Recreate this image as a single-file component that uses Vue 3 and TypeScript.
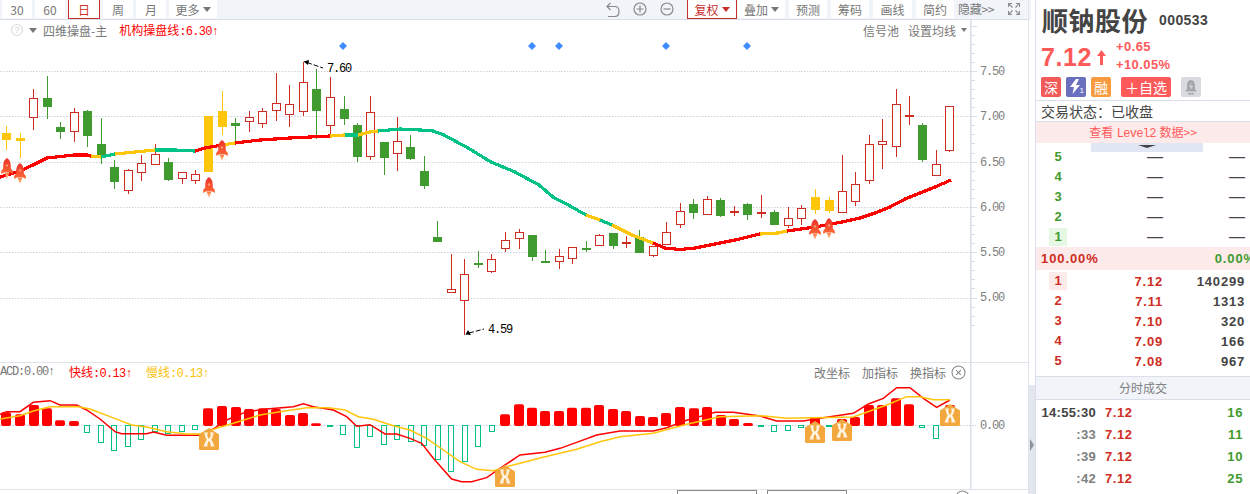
<script setup lang="ts">
type Kind = 'r' | 'g' | 'y'
type Tuple = [number, Kind, number, number, number, number]

const raw: Tuple[] = [
  [6, 'y', 126, 150, 133, 140], [20, 'y', 133, 158, 138, 141], [33, 'r', 89, 130, 98, 117], [47, 'g', 76, 119, 98, 107],
  [60, 'g', 122, 139, 127, 132], [74, 'r', 108, 142, 112, 131], [87, 'g', 110, 147, 111, 136], [101, 'g', 118, 164, 144, 155],
  [114, 'g', 160, 189, 167, 182], [128, 'r', 169, 194, 170, 190], [141, 'r', 155, 181, 163, 172], [155, 'r', 144, 165, 154, 164],
  [168, 'g', 158, 181, 162, 180], [182, 'r', 172, 184, 172, 178], [195, 'r', 170, 184, 174, 180], [208, 'y', 116, 172, 116, 172],
  [222, 'y', 91, 135, 111, 127], [235, 'g', 118, 143, 123, 126], [249, 'r', 111, 132, 117, 121], [262, 'r', 108, 128, 111, 123],
  [276, 'r', 73, 121, 103, 110], [289, 'r', 85, 127, 104, 114], [303, 'r', 62, 116, 82, 111], [316, 'g', 69, 139, 89, 111],
  [330, 'r', 77, 136, 97, 125], [344, 'g', 96, 125, 109, 119], [357, 'g', 123, 162, 125, 157], [370, 'r', 96, 160, 112, 156],
  [384, 'g', 142, 175, 142, 158], [397, 'r', 117, 171, 141, 153], [410, 'g', 135, 160, 147, 159], [424, 'g', 156, 189, 171, 186],
  [437, 'g', 221, 237, 237, 242], [451, 'r', 254, 293, 289, 292], [464, 'r', 259, 335, 274, 300], [478, 'g', 251, 268, 263, 265],
  [491, 'r', 254, 273, 259, 271], [505, 'r', 232, 252, 240, 248], [519, 'r', 229, 249, 232, 238], [532, 'g', 235, 261, 235, 257],
  [545, 'g', 250, 263, 261, 263], [559, 'r', 249, 269, 256, 261], [572, 'r', 247, 264, 247, 258], [586, 'g', 241, 252, 248, 249],
  [599, 'r', 234, 246, 235, 245], [613, 'g', 233, 249, 233, 246], [626, 'r', 236, 248, 242, 244], [639, 'g', 230, 253, 237, 253],
  [653, 'r', 246, 257, 246, 255], [666, 'r', 222, 245, 232, 244], [680, 'r', 203, 228, 211, 224], [693, 'g', 199, 219, 204, 213],
  [707, 'r', 196, 215, 199, 214], [720, 'g', 198, 217, 200, 216], [734, 'r', 206, 216, 211, 211], [747, 'g', 203, 220, 204, 215],
  [761, 'r', 195, 218, 212, 213], [774, 'g', 210, 225, 212, 225], [788, 'r', 207, 228, 218, 225], [801, 'r', 205, 225, 208, 218],
  [815, 'y', 189, 214, 197, 210], [829, 'y', 197, 213, 200, 211], [842, 'r', 155, 213, 191, 212], [855, 'r', 172, 206, 184, 201],
  [869, 'r', 135, 184, 144, 180], [882, 'r', 119, 169, 141, 144], [896, 'r', 89, 157, 104, 146], [909, 'r', 96, 125, 115, 116],
  [922, 'g', 123, 162, 125, 160], [936, 'r', 150, 176, 164, 175], [949, 'r', 106, 152, 106, 150]
]

const candleColors: Record<Kind, string> = { r: '#cf2c22', g: '#3f9a30', y: '#ffc60b' }
const candles = raw.map(([x, kind, hi, lo, top, bottom]) => ({
  cx: x + 0.5,
  hi,
  lo,
  top,
  bottom,
  hollow: kind === 'r' && bottom - top > 2,
  color: candleColors[kind]
}))

const maSegments: { color: string; pts: string }[] = [
  { color: '#ff0000', pts: '0,177 20,171 33,165 47,158 60,156.5 74,155 87,155 91,156' },
  { color: '#ffc60b', pts: '91,156 101,157' },
  { color: '#00c287', pts: '101,157 115,154' },
  { color: '#ffc60b', pts: '115,154 135,152 155,150' },
  { color: '#00c287', pts: '155,150 175,150 195,151' },
  { color: '#ff0000', pts: '195,151 205,148 222,145' },
  { color: '#ffc60b', pts: '222,145 235,143' },
  { color: '#ff0000', pts: '235,143 260,140 290,138 330,136' },
  { color: '#ffc60b', pts: '330,136 345,135' },
  { color: '#00c287', pts: '345,135 358,135' },
  { color: '#ffc60b', pts: '358,135 370,132 378,131' },
  { color: '#00c287', pts: '378,131 400,129 420,130 433,131 444,135 468,148 491,162 515,172 539,185 553,197 570,206 586,215' },
  { color: '#ffc60b', pts: '586,215 600,220' },
  { color: '#00c287', pts: '600,220 612,225' },
  { color: '#ffc60b', pts: '612,225 632,235 653,243' },
  { color: '#ff0000', pts: '653,243 665,248 680,249.5 695,248 715,244 735,240 760,234' },
  { color: '#ffc60b', pts: '760,234 778,233 787,231' },
  { color: '#ff0000', pts: '787,231 815,227 842,222 860,218 875,213 890,207 905,199 915,195 935,187 951,180' }
]

const gridYs = [71.5, 116.5, 162.5, 207.5, 252.5, 298.5]
const axisLabels = [
  { y: 75, t: '7.50' }, { y: 120, t: '7.00' }, { y: 166, t: '6.50' },
  { y: 211, t: '6.00' }, { y: 256, t: '5.50' }, { y: 301, t: '5.00' }
]
const minorTicks = Array.from({ length: 34 }, (_, i) => ({
  y: Math.round(71 + (i - 5) * 9.06) + 0.5,
  major: (i - 5) % 5 === 0
})).filter(t => t.y > 24)
const diamonds = [343, 532, 559, 666, 747]
const rockets = [
  { x: 1, y: 158 }, { x: 14, y: 163 }, { x: 203, y: 177 }, { x: 216, y: 140 }, { x: 809, y: 219 }, { x: 823, y: 218 }
]

const redBars: [number, number][] = [
  [6, 172], [20, 178], [34, 150], [47, 160], [60, 196], [74, 198], [208, 160], [222, 153], [236, 156], [249, 162],
  [263, 160], [276, 162], [290, 180], [303, 174], [316, 205], [505, 178], [519, 148], [532, 158], [545, 168], [559, 168],
  [572, 158], [586, 158], [599, 150], [613, 162], [626, 168], [640, 183], [653, 186], [666, 174], [680, 156], [694, 160],
  [707, 156], [721, 180], [734, 192], [748, 204], [815, 186], [842, 192], [855, 186], [869, 150], [882, 150], [896, 130],
  [909, 148], [950, 150]
]
const macdUp = redBars.map(([x, z]) => ({ x: x - 5, y: 355 + z / 3, h: 426 - (355 + z / 3) }))
const greenBars: [number, number][] = [
  [87, 233], [101, 263], [114, 287], [128, 275], [141, 253], [155, 230], [168, 235], [182, 230], [195, 224],
  [343, 238], [357, 278], [370, 245], [384, 268], [397, 254], [411, 258], [424, 270], [438, 313], [451, 350],
  [465, 320], [478, 275], [492, 230], [774, 230], [788, 226], [801, 217], [922, 217], [936, 250]
]
const macdDown = greenBars.map(([x, z]) => ({ x: x - 2.5, h: Math.round(355 + z / 3 - 425.5) }))
const macdDash = [330, 761, 829]

const toPts = (list: [number, number][], ox: number) =>
  list.map(([x, y]) => `${ox + x / 3},${355 + y / 3}`).join(' ')

const fast = toPts([
  [0, 178], [20, 170], [60, 170], [100, 142], [150, 137], [180, 150], [230, 150], [260, 165], [300, 192], [345, 230],
  [365, 236], [440, 236], [460, 231], [500, 241], [595, 241], [640, 222], [680, 195], [740, 170], [800, 162], [880, 155],
  [910, 146], [940, 155], [1000, 165], [1040, 185], [1070, 214], [1110, 209], [1155, 237], [1190, 237], [1230, 250],
  [1265, 265], [1300, 310], [1355, 372], [1385, 380], [1415, 380], [1460, 368], [1500, 340], [1560, 300],
  [1635, 292], [1680, 280], [1730, 262], [1790, 240], [1860, 228], [1960, 228], [2000, 218], [2060, 196], [2145, 172],
  [2200, 172], [2280, 183], [2330, 198], [2410, 198], [2460, 190], [2560, 175], [2605, 147], [2650, 130], [2690, 98],
  [2730, 98], [2770, 130], [2810, 157], [2850, 135]
], 0)
const slow = toPts([
  [0, 192], [60, 182], [100, 168], [150, 155], [235, 155], [270, 162], [330, 185], [395, 210], [440, 216], [500, 230],
  [560, 237], [600, 237], [650, 220], [700, 205], [780, 180], [840, 170], [920, 158], [985, 158], [1035, 165], [1075, 185],
  [1120, 193], [1180, 212], [1230, 225], [1280, 250], [1330, 285], [1380, 320], [1430, 343], [1480, 347], [1520, 335],
  [1560, 325], [1635, 305], [1730, 283], [1800, 260], [1860, 245], [1960, 235], [2060, 208], [2160, 185], [2280, 182],
  [2360, 190], [2560, 186], [2660, 150], [2720, 125], [2760, 125], [2800, 134], [2850, 134]
], 0)

const badges = [
  { x: 199, y: 428 }, { x: 495, y: 465 }, { x: 805, y: 421 }, { x: 832, y: 419 }, { x: 940, y: 404 }
]

const leftTabs = ['30', '60', '日', '周', '月']
const rightTools = [
  { t: '预测', c: 'w38' }, { t: '筹码', c: 'w38' }, { t: '画线', c: 'w39' }, { t: '简约', c: 'w38' }
]
const sellRows = ['5', '4', '3', '2', '1']
const buyRows = [
  { n: '1', p: '7.12', v: '140299' }, { n: '2', p: '7.11', v: '1313' }, { n: '3', p: '7.10', v: '320' },
  { n: '4', p: '7.09', v: '166' }, { n: '5', p: '7.08', v: '967' }
]
const ticks = [
  { t: '14:55:30', first: true, v: '16' }, { t: ':33', first: false, v: '11' },
  { t: ':39', first: false, v: '10' }, { t: ':42', first: false, v: '25' }
]
</script>

<template>
  <div class="page">
    <svg class="defs" width="0" height="0" aria-hidden="true">
      <defs>
        <linearGradient id="rocketFill" x1="0" y1="0" x2="0" y2="1">
          <stop offset="0" stop-color="#ea2f2b" />
          <stop offset="1" stop-color="#ff6a35" />
        </linearGradient>
        <linearGradient id="flameFill" x1="0" y1="0" x2="0" y2="1">
          <stop offset="0" stop-color="#ff7a3c" />
          <stop offset="1" stop-color="#ffd2b0" />
        </linearGradient>
        <symbol id="rocket" viewBox="0 0 12 21">
          <path d="M6 0C8.700 1.800 9.800 4.500 9.800 8V10.500L11.800 13V16L9.300 14.500H2.700L0.200 16V13L2.200 10.500V8C2.200 4.500 3.300 1.800 6 0Z" fill="url(#rocketFill)" />
          <circle cx="6" cy="7.500" r="1.200" fill="#ff9a70" />
          <path d="M3.800 15H8.200L7 18.500L6 21L5 18.500Z" fill="url(#flameFill)" />
        </symbol>
        <symbol id="cross" viewBox="0 0 20 22">
          <path d="M0 6.500L10 0L20 6.500V20.500Q20 22 18.500 22H1.500Q0 22 0 20.500Z" fill="#f2a83e" />
          <path d="M5 4.500H9L8.300 6.500C8.300 8.500 9 9.800 10 10.800C11 9.800 11.700 8.500 11.700 6.500L11 4.500H15L14 7C14 9 13 10.500 12.200 11.500C13.100 12.800 14 14.500 14.300 15.500L15.500 18.500H11.500L11.500 16.500C11.500 15 10.800 14 10 13C9.200 14 8.500 15 8.500 16.500L8.500 18.500H4.500L5.700 15.500C6 14.500 6.900 12.800 7.800 11.500C7 10.500 6 9 6 7Z" fill="#fff4e2" />
        </symbol>
      </defs>
    </svg>

    <div class="left">
      <header class="toolbar">
        <div class="tabs">
          <button v-for="t in leftTabs" :key="t" class="tab" :class="{ active: t === '日' }">{{ t }}</button>
          <button class="tab more">更多<i class="caret grey"></i></button>
        </div>
        <div class="tools">
          <div class="icons">
            <svg class="ico" width="14" height="16" viewBox="0 0 14 16" fill="none" stroke="#8a8a8a" stroke-width="1.200">
              <path d="M4.500 1L1 4.500L4.500 8" />
              <path d="M1 4.500H9C11.500 4.500 13 6.500 13 9.500C13 12.500 11.500 14.500 9 14.500H2" />
            </svg>
            <svg class="ico" width="14" height="14" viewBox="0 0 14 14" fill="none" stroke="#8a8a8a" stroke-width="1.200">
              <circle cx="7" cy="7" r="6" /><path d="M3.500 7H10.500M7 3.500V10.500" />
            </svg>
            <svg class="ico" width="14" height="14" viewBox="0 0 14 14" fill="none" stroke="#8a8a8a" stroke-width="1.200">
              <circle cx="7" cy="7" r="6" /><path d="M3.500 7H10.500" />
            </svg>
          </div>
          <button class="tab fq">复权<i class="caret red"></i></button>
          <button class="tab w47">叠加<i class="caret grey"></i></button>
          <button v-for="t in rightTools" :key="t.t" class="tab" :class="t.c">{{ t.t }}</button>
          <span class="hide-link">隐藏&gt;&gt;</span>
          <svg class="expand" width="12" height="12" viewBox="0 0 12 12" fill="none" stroke="#8a8a8a" stroke-width="1.100">
            <path d="M0.500 4V0.500H4M8 0.500H11.500V4M11.500 8V11.500H8M4 11.500H0.500V8M0.500 0.500L4.500 4.500M11.500 0.500L7.500 4.500M11.500 11.500L7.500 7.500M0.500 11.500L4.500 7.500" />
          </svg>
        </div>
      </header>

      <section class="main-chart">
        <div class="chart-head">
          <div class="head-left">
            <svg width="14" height="14" viewBox="0 0 14 14" class="help">
              <circle cx="7" cy="7" r="5.500" fill="none" stroke="#dcdcdc" stroke-width="1.200" />
              <text x="7" y="10" text-anchor="middle" class="help-q">?</text>
            </svg>
            <i class="tri"></i>
            <span class="grey-text">四维操盘-主</span>
            <span class="red-text">机构操盘线<em class="num">:6.30↑</em></span>
          </div>
          <div class="head-right">
            <span>信号池</span><span>设置均线</span><i class="tri small"></i>
          </div>
        </div>
        <svg class="plot" width="1029" height="342" viewBox="0 20 1029 342">
          <line v-for="y in gridYs" :key="y" x1="0" :y1="y" x2="970" :y2="y" class="grid" />
          <rect x="970" y="20" width="1.500" height="342" fill="#d8dfe8" />
          <line v-for="t in minorTicks" :key="t.y" x1="971" :y1="t.y" :x2="t.major ? 977 : 975" :y2="t.y" stroke="#d8dfe8" />
          <text v-for="l in axisLabels" :key="l.t" x="980" :y="l.y" class="axis">{{ l.t }}</text>

          <g v-for="d in diamonds" :key="d">
            <path :d="`M${d} 42L${d + 4} 46L${d} 50L${d - 4} 46Z`" fill="#3e8cff" />
          </g>

          <g shape-rendering="crispEdges">
            <g v-for="c in candles" :key="c.cx">
              <line :x1="c.cx" :y1="c.hi" :x2="c.cx" :y2="c.top" :stroke="c.color" />
              <line :x1="c.cx" :y1="c.bottom" :x2="c.cx" :y2="c.lo" :stroke="c.color" />
              <rect v-if="c.hollow" :x="c.cx - 4" :y="c.top + 0.5" width="8" :height="c.bottom - c.top" fill="#fff" :stroke="c.color" />
              <rect v-else :x="c.cx - 4.5" :y="c.top" width="9" :height="Math.max(c.bottom - c.top, 1.500)" :fill="c.color" />
            </g>
          </g>

          <polyline v-for="(s, i) in maSegments" :key="i" :points="s.pts" fill="none" :stroke="s.color" stroke-width="3.200" shape-rendering="crispEdges" />

          <use v-for="r in rockets" :key="r.x" href="#rocket" :x="r.x" :y="r.y" width="12" height="21" />

          <path d="M303.500 61.500L309 60L308 65Z" fill="#000" />
          <path d="M307 62.500L323 68" fill="none" stroke="#000" stroke-dasharray="5 2" />
          <text x="327" y="72" class="mark">7.60</text>
          <path d="M465.500 334.500L468 330L471 335Z" fill="#000" />
          <path d="M469 333L484 329" fill="none" stroke="#000" stroke-dasharray="5 2" />
          <text x="488" y="333" class="mark">4.59</text>
        </svg>
      </section>

      <section class="sub-chart">
        <div class="sub-head">
          <div class="sub-left">
            <span class="macd">ACD:0.00↑</span>
            <span class="red-text">快线<em class="num">:0.13↑</em></span>
            <span class="yellow-text">慢线<em class="num">:0.13↑</em></span>
          </div>
          <div class="sub-right">
            <span>改坐标</span><span>加指标</span><span>换指标</span>
            <svg width="15" height="15" viewBox="0 0 15 15" fill="none" stroke="#8a8a8a" stroke-width="1.100">
              <circle cx="7.500" cy="7.500" r="6.500" /><path d="M5.200 5.200L9.800 9.800M9.800 5.200L5.200 9.800" />
            </svg>
          </div>
        </div>
        <svg class="plot" width="1029" height="126" viewBox="0 363 1029 126">
          <line x1="0" y1="425.500" x2="976" y2="425.500" class="grid" />
          <rect x="970" y="363" width="1.500" height="126" fill="#d8dfe8" />
          <text x="980" y="429" class="axis">0.00</text>
          <rect v-for="b in macdUp" :key="b.x" :x="b.x" :y="b.y" width="10" :height="b.h" rx="2" fill="#ff0000" />
          <g shape-rendering="crispEdges">
            <rect v-for="b in macdDown" :key="b.x" :x="b.x" y="425.500" width="5" :height="b.h" fill="#fff" stroke="#00c287" />
            <rect v-for="x in macdDash" :key="x" :x="x - 3" y="425" width="6" height="1.500" fill="#00c287" />
          </g>
          <polyline :points="fast" fill="none" stroke="#ff0000" stroke-width="1.500" />
          <polyline :points="slow" fill="none" stroke="#ffc60b" stroke-width="1.500" />
          <use v-for="b in badges" :key="b.x" href="#cross" :x="b.x" :y="b.y" width="20" height="22" />
        </svg>
      </section>

      <footer class="strip">
        <span class="strip-org">成交量</span>
        <span class="strip-box">分时图</span>
        <span class="strip-box">周线</span>
        <span class="strip-txt">改坐标</span>
        <span class="strip-txt">换指标</span>
        <svg class="strip-close" width="15" height="15" viewBox="0 0 15 15" fill="none" stroke="#8a8a8a" stroke-width="1.100">
          <circle cx="7.500" cy="7.500" r="6.500" />
        </svg>
      </footer>
    </div>

    <div class="gutter">
      <div class="gutter-cap"></div>
      <div class="gutter-fill"><i class="gutter-arrow"></i></div>
    </div>

    <aside class="panel">
      <div class="title">
        <span class="name">顺钠股份</span>
        <span class="code">000533</span>
      </div>
      <div class="quote">
        <span class="price">7.12</span>
        <svg class="up" width="9" height="15" viewBox="0 0 9 15"><path d="M4.500 0L9 6H6V15H3V6H0Z" fill="#ff5a5a" /></svg>
        <div class="change"><span>+0.65</span><span>+10.05%</span></div>
      </div>
      <div class="badges">
        <span class="bd bd-red">深</span>
        <span class="bd bd-blue">
          <svg width="14" height="16" viewBox="0 0 14 16"><path d="M7 0L1 8H5L3.500 15L11 6H7L10 0Z" fill="#fff" /></svg>
          <sub>1</sub>
        </span>
        <span class="bd bd-orange">融</span>
        <span class="bd-add">＋自选</span>
        <span class="bd bd-grey">
          <svg width="14" height="16" viewBox="0 0 14 16">
            <path d="M7 1C10 1 11 4 11 7V10L13 12.500H1L3 10V7C3 4 4 1 7 1Z" fill="#a4a7ad" />
            <path d="M7.500 4L5 8H7L6.500 11L9 7H7Z" fill="#d8dae0" />
            <rect x="4" y="14" width="6" height="1.500" fill="#a4a7ad" />
          </svg>
        </span>
      </div>
      <div class="state">交易状态：已收盘</div>
      <div class="level2">查看 <span class="lv">Level2</span> 数据&gt;&gt;</div>

      <div class="book">
        <div class="pull"><i></i></div>
        <div v-for="n in sellRows" :key="n" class="row">
          <span class="idx green" :class="{ 'hl-g': n === '1' }">{{ n }}</span>
          <span class="dash">—</span>
          <span class="dash">—</span>
        </div>
        <div class="ratio"><span class="r">100.00%</span><span class="g">0.00%</span></div>
        <div v-for="b in buyRows" :key="b.n" class="row">
          <span class="idx redn" :class="{ 'hl-r': b.n === '1' }">{{ b.n }}</span>
          <span class="px">{{ b.p }}</span>
          <span class="vol">{{ b.v }}</span>
        </div>
      </div>

      <div class="sec">分时成交</div>
      <div class="tick" v-for="t in ticks" :key="t.t">
        <span :class="t.first ? 'time' : 'time dim'">{{ t.t }}</span>
        <span class="tpx">7.12</span>
        <span class="tv">{{ t.v }}</span>
      </div>
    </aside>
  </div>
</template>

<style scoped>
.page {
  display: grid;
  grid-template-columns: 1029px 6px 215px;
  width: 1250px;
  height: 494px;
  overflow: hidden;
  background: #fff;
  font-family: "Noto Sans CJK SC", "Liberation Sans", sans-serif;
  color: #777;
}
.defs { position: absolute; }
em { font-style: normal; }
.left { display: flex; flex-direction: column; border-right: 1px solid #dfe3ec; box-sizing: border-box; width: 1029px; }

.toolbar {
  display: flex;
  justify-content: space-between;
  height: 20px;
  box-sizing: border-box;
  background: #f1f4f9;
  border-bottom: 1px solid #d8dde8;
  flex: none;
}
.tabs { display: flex; gap: 3px; padding-left: 2px; }
.tab {
  display: flex;
  align-items: center;
  justify-content: center;
  width: 30px;
  height: 18px;
  padding: 0;
  border: 0;
  background: #fff;
  font: 12px "Noto Sans CJK SC", sans-serif;
  color: #777;
}
.tab.active { width: 32px; height: 19px; box-sizing: border-box; border: 1px solid #c9302c; border-top: 0; color: #c9302c; }
.tab.more { width: 48px; }
.tools { display: flex; align-items: flex-start; gap: 4px; padding-right: 8px; }
.icons { display: flex; gap: 13px; margin-right: 9px; padding-top: 2px; }
.fq { width: 50px; height: 19px; box-sizing: border-box; border: 1px solid #c9302c; border-top: 0; color: #c9302c; margin-right: -3px; }
.w47 { width: 47px; }
.w38 { width: 38px; }
.w39 { width: 39px; }
.hide-link { width: 36px; font-size: 12px; line-height: 18px; white-space: nowrap; letter-spacing: -0.3px; }
.expand { margin: 3px 0 0 10px; }
.caret { display: inline-block; margin-left: 3px; border: 4px solid transparent; border-bottom: 0; border-top-width: 5px; }
.caret.grey { border-top-color: #777; }
.caret.red { border-top-color: #c9302c; }

.main-chart { position: relative; height: 342px; flex: none; }
.sub-chart { position: relative; height: 127px; border-top: 1px solid #dfe3ec; box-sizing: border-box; flex: none; }
.plot { display: block; }

.chart-head {
  position: absolute;
  left: 0;
  top: 0;
  width: 967px;
  height: 20px;
  display: flex;
  justify-content: space-between;
  align-items: center;
  font-size: 12px;
}
.head-left { display: flex; align-items: center; padding-left: 10px; }
.help { margin-right: 5px; }
.help-q { font: 9px "Liberation Sans", sans-serif; fill: #cfcfcf; }
.tri { border: 4px solid transparent; border-top: 5px solid #777; border-bottom: 0; margin-right: 6px; }
.tri.small { border-width: 3px; border-top-width: 4px; border-bottom: 0; margin: 0 0 0 -4px; }
.grey-text { margin-right: 12px; }
.red-text { color: #f00; }
.yellow-text { color: #fbc10a; }
.num { font-family: "Liberation Mono", monospace; letter-spacing: -0.7px; }
.head-right { display: flex; align-items: center; gap: 9px; }

.sub-head {
  position: absolute;
  left: 0;
  top: 0;
  width: 966px;
  height: 18px;
  display: flex;
  justify-content: space-between;
  align-items: center;
  font-size: 12px;
  z-index: 1;
}
.sub-left { display: flex; align-items: center; gap: 14px; }
.macd { width: 55px; white-space: nowrap; font-family: "Liberation Mono", monospace; letter-spacing: -1.200px; }
.sub-right { display: flex; align-items: center; gap: 12px; }
.sub-right svg { margin-left: -7px; }

.grid { stroke: #ccd3e0; stroke-dasharray: 1.500 1.500; }
.axis { font: 12px "Liberation Mono", monospace; letter-spacing: -1.200px; fill: #808080; }
.mark { font: 12px "Liberation Mono", monospace; letter-spacing: -1.200px; fill: #000; }

.strip {
  height: 5px;
  box-sizing: border-box;
  border-top: 1px solid #dfe3ec;
  overflow: hidden;
  display: flex;
  font-size: 12px;
  line-height: 16px;
  color: #777;
  flex: none;
}
.strip-org { color: #f90; margin: 3px 0 0 48px; width: 629px; flex: none; }
.strip-box {
  width: 80px;
  height: 18px;
  box-sizing: border-box;
  border: 1px solid #888;
  text-align: center;
  margin-right: 10px;
  flex: none;
  line-height: 18px;
}
.strip-txt { margin: 3px 8px 0 4px; flex: none; }
.strip-close { flex: none; margin-left: 2px; }

.gutter { display: flex; flex-direction: column; }
.gutter-cap { height: 20px; background: #f1f4f9; flex: none; width: 2px; }
.gutter-fill {
  margin-top: 365px;
  flex: 1;
  background: #e3e6ee;
  position: relative;
}
.gutter-arrow {
  position: absolute;
  left: 1px;
  top: 54px;
  border: 6px solid transparent;
  border-left: 4px solid #8f939c;
  border-right: 0;
}

.panel {
  border-left: 1px solid #d9deea;
  box-sizing: border-box;
  overflow: hidden;
  display: flex;
  flex-direction: column;
  color: #444;
  width: 215px;
  font-family: "Liberation Sans", "Noto Sans CJK SC", sans-serif;
}
.title { height: 40px; display: flex; align-items: center; padding-left: 6px; flex: none; }
.name { font: 700 26px/40px "Noto Sans CJK SC", sans-serif; letter-spacing: 0.5px; color: #444; }
.code { font: 700 14px "Liberation Sans", sans-serif; margin-left: 11px; margin-top: -1px; letter-spacing: 0.4px; }
.quote { height: 35px; display: flex; align-items: center; padding-left: 5px; flex: none; color: #ff5a5a; }
.price { font: 700 25px "Liberation Sans", sans-serif; width: 56px; letter-spacing: 0.6px; }
.up { margin-right: 10px; }
.change { display: flex; flex-direction: column; margin-top: -3px; font: 700 13px/18px "Liberation Sans", sans-serif; letter-spacing: 0.4px; }
.badges { display: flex; height: 25px; padding: 2px 0 0 5px; box-sizing: border-box; flex: none; }
.bd {
  width: 20px;
  height: 20px;
  border-radius: 2px;
  display: flex;
  align-items: center;
  justify-content: center;
  color: #fff;
  font: 14px/20px "Noto Sans CJK SC", sans-serif;
  margin-right: 5px;
  flex: none;
  position: relative;
}
.bd-red { background: #f25a5a; }
.bd-blue { background: #6a6fc0; }
.bd-blue sub { font: 8px "Liberation Sans", sans-serif; position: absolute; right: 2px; bottom: 2px; }
.bd-orange { background: #f79a40; margin-right: 10px; }
.bd-add {
  width: 50px;
  height: 20px;
  border-radius: 2px;
  background: #ff5a5a;
  color: #fff;
  font: 14px/20px "Noto Sans CJK SC", sans-serif;
  text-align: center;
  margin-right: 10px;
  white-space: nowrap;
}
.bd-grey { background: #d8dae0; }
.state {
  height: 22px;
  box-sizing: border-box;
  border-top: 1px solid #d9deea;
  border-bottom: 1px solid #d9deea;
  padding-left: 5px;
  font: 14px/21px "Noto Sans CJK SC", sans-serif;
  color: #444;
  flex: none;
}
.level2 {
  height: 21px;
  background: #fdeaea;
  color: #ff5a5a;
  text-align: center;
  font: 12px/20px "Noto Sans CJK SC", sans-serif;
  word-spacing: 1px;
  flex: none;
}
.lv { font-family: "Liberation Mono", monospace; letter-spacing: -0.700px; }
.book { position: relative; padding-top: 4px; flex: none; }
.pull {
  position: absolute;
  left: 55px;
  top: 0;
  width: 112px;
  height: 9px;
  background: #e0e6f4;
  display: flex;
  justify-content: center;
}
.pull i { width: 0; height: 0; margin-top: 2px; border: 9px solid transparent; border-top: 3px solid #444; border-bottom: 0; }
.row {
  display: grid;
  grid-template-columns: 13px 18px 96px 82px;
  height: 20px;
  align-items: center;
  font: 700 13px "Liberation Sans", sans-serif;
  letter-spacing: 0.8px;
}
.idx { grid-column: 2; text-align: center; height: 18px; line-height: 18px; letter-spacing: 0; }
.green { color: #3f9a30; }
.redn { color: #cf2c22; }
.hl-g { background: #e6f8e4; }
.hl-r { background: #fdeaea; }
.dash, .px, .vol { text-align: right; }
.dash { font: 400 16px/20px "Liberation Sans", sans-serif; letter-spacing: 0; color: #444; }
.px { color: #cf2c22; }
.vol { color: #444; }
.ratio {
  display: flex;
  justify-content: space-between;
  height: 23px;
  margin-bottom: 1px;
  background: #fdeaea;
  padding-left: 5px;
  font: 700 13px/23px "Liberation Sans", sans-serif;
  letter-spacing: 0.9px;
  white-space: nowrap;
}
.ratio .r { color: #cf2c22; }
.ratio .g { color: #3f9a30; margin-right: -6px; }
.sec {
  margin-top: 5px;
  height: 24px;
  box-sizing: border-box;
  background: #f1f4f9;
  border-top: 1px solid #d9deea;
  border-bottom: 1px solid #d9deea;
  text-align: center;
  font: 12px/22px "Noto Sans CJK SC", sans-serif;
  color: #808080;
  flex: none;
}
.tick {
  display: grid;
  grid-template-columns: 60px 45px 102px;
  height: 22px;
  align-items: center;
  font: 700 13px "Liberation Sans", sans-serif;
  letter-spacing: 0.3px;
  flex: none;
}
.sec + .tick { margin-top: 1px; }
.time { text-align: right; white-space: nowrap; }
.dim { color: #808080; }
.tpx { color: #cf2c22; padding-left: 9px; letter-spacing: 0.6px; }
.tv { color: #3f9a30; text-align: right; letter-spacing: 0.6px; }
</style>

<style>
html, body { margin: 0; padding: 0; overflow: hidden; background: #fff; }
</style>
